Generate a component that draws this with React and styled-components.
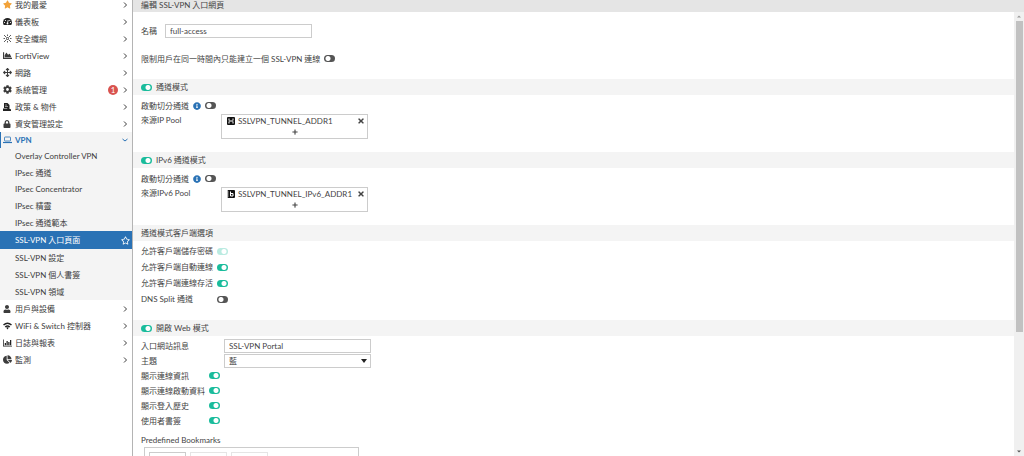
import { useState } from "react";
import styled, { createGlobalStyle, css } from "styled-components";
import {
  FaStar,
  FaRegStar,
  FaChartArea,
  FaArrowsAlt,
  FaCog,
  FaLock,
  FaUser,
  FaChartPie,
  FaInfoCircle,
  FaTimes,
  FaPlus,
  FaPen,
  FaTrash,
} from "react-icons/fa";

// Icons
const FabricIcon = () => (
  <svg width="9" height="9" viewBox="0 0 18 18" stroke="#333" strokeWidth="1.6" fill="none">
    <path d="M2 2l5 5M11 11l5 5M16 2l-5 5M7 11l-5 5M9 1v3M9 14v3M1 9h3M14 9h3" />
    <circle cx="9" cy="9" r="2" />
  </svg>
);

const GaugeIcon = () => (
  <svg width="9" height="9" viewBox="0 0 18 18">
    <path fill="#222" d="M9 2a9 9 0 0 0-9 9c0 2 .5 3.600 1.400 5h15.200c.9-1.400 1.400-3 1.400-5a9 9 0 0 0-9-9z" />
    <path stroke="#fff" strokeWidth="1.6" d="M9 12l1.500-6" />
    <g fill="#fff">
      <circle cx="3" cy="11" r="1.200" />
      <circle cx="5" cy="7" r="1.200" />
      <circle cx="13.500" cy="7" r="1.200" />
      <circle cx="15" cy="11" r="1.200" />
      <circle cx="9" cy="13" r="1.800" />
    </g>
  </svg>
);

const PolicyIcon = () => (
  <svg width="8" height="8" viewBox="0 0 16 16">
    <path fill="#222" d="M2 0h7l4 4v6H2z" />
    <path fill="#222" d="M0 11h8l2-2 6 4v3H0z" />
    <path stroke="#fff" strokeWidth="1" d="M4 4h4M4 7h6" />
  </svg>
);

const LaptopIcon = () => (
  <svg width="9" height="8" viewBox="0 0 18 16" fill="none" stroke="currentColor" strokeWidth="1.6">
    <rect x="3" y="2" width="12" height="8" rx="1" />
    <path d="M0 13h18" strokeWidth="2.400" />
  </svg>
);

const WifiIcon = () => (
  <svg width="9" height="8" viewBox="0 0 18 16" fill="none" stroke="#222" strokeWidth="3">
    <path d="M1 6c5-4.500 11-4.500 16 0M4.500 10c3-2.600 6-2.600 9 0" />
    <path d="M6.500 11.500c1.500-1.300 3.500-1.300 5 0L9 15z" fill="#222" stroke="none" />
  </svg>
);

const BarsIcon = () => (
  <svg width="9" height="8" viewBox="0 0 18 16" fill="#222">
    <path d="M0 1h1.500v12.500H18V15H0z" />
    <path d="M3.500 8H6v4.500H3.500zM7 4h2.500v8.500H7zM10.500 6H13v6.500h-2.500zM14 2h2.500v10.500H14z" />
  </svg>
);

const RangeIcon = () => (
  <svg width="8" height="8" viewBox="0 0 16 16">
    <rect width="16" height="16" rx="2" fill="#111" />
    <path d="M4 3v4M12 3v4M4 9v4M12 9v4M4 8h8" stroke="#fff" strokeWidth="2" />
  </svg>
);

const SixIcon = () => (
  <svg width="8" height="8" viewBox="0 0 16 16">
    <rect x="1" width="15" height="16" rx="2" fill="#111" />
    <path d="M7 3v9h5V7H7M0 4h3M0 8h3M0 12h3" fill="none" stroke="#fff" strokeWidth="2" />
  </svg>
);

const Chevron = ({ down }) => (
  <svg width="6" height="6" viewBox="0 0 12 12" fill="none" stroke="currentColor" strokeWidth="2">
    <path d={down ? "M1 4l5 4 5-4" : "M4 1l5 5-5 5"} />
  </svg>
);

const vpnItems = [
  { label: "Overlay Controller VPN", short: true },
  { label: "IPsec 通道" },
  { label: "IPsec Concentrator", short: true },
  { label: "IPsec 精靈" },
  { label: "IPsec 通道範本" },
  { label: "SSL-VPN 入口頁面", selected: true },
  { label: "SSL-VPN 設定" },
  { label: "SSL-VPN 個人書簽" },
  { label: "SSL-VPN 領域" },
];

const menu = [
  { label: "我的最愛", icon: <FaStar color="#f2a33a" /> },
  { label: "儀表板", icon: <GaugeIcon /> },
  { label: "安全織網", icon: <FabricIcon /> },
  { label: "FortiView", icon: <FaChartArea /> },
  { label: "網路", icon: <FaArrowsAlt /> },
  { label: "系統管理", icon: <FaCog />, badge: 1 },
  { label: "政策 & 物件", icon: <PolicyIcon /> },
  { label: "資安管理設定", icon: <FaLock size={8} /> },
  { label: "VPN", icon: <LaptopIcon />, children: vpnItems },
  { label: "用戶與設備", icon: <FaUser size={8} /> },
  { label: "WiFi & Switch 控制器", icon: <WifiIcon /> },
  { label: "日誌與報表", icon: <BarsIcon /> },
  { label: "監測", icon: <FaChartPie /> },
];

const Toggle = ({ id, on = false, disabled }) => {
  const [checked, setChecked] = useState(on);
  return (
    <Switch
      type="checkbox"
      id={id}
      checked={checked}
      disabled={disabled}
      onChange={() => setChecked(!checked)}
    />
  );
};

const Pool = ({ icon, name }) => (
  <PoolBox>
    <PoolEntry>
      {icon}
      <PoolName>{name}</PoolName>
      <IconButton type="button" aria-label="移除">
        <FaTimes size={8} />
      </IconButton>
    </PoolEntry>
    <IconButton type="button" aria-label="新增">
      <FaPlus size={6} />
    </IconButton>
  </PoolBox>
);

const SplitRow = ({ id }) => (
  <Row $height={17}>
    <label htmlFor={id}>啟動切分通道</label>
    <FaInfoCircle size={8} color="#2a72b5" />
    <Toggle id={id} />
  </Row>
);

const ToggleRow = ({ id, label, width, height, on, disabled }) => (
  <Row $height={height}>
    <Label htmlFor={id} $width={width}>
      {label}
    </Label>
    <Toggle id={id} on={on} disabled={disabled} />
  </Row>
);

const App = () => {
  return (
    <>
      <GlobalStyle />
      <Page>
        <Sidebar>
          <MenuList>
            {menu.map((item) => (
              <li key={item.label}>
                <MenuLink href="#" $open={!!item.children}>
                  <MenuIcon>{item.icon}</MenuIcon>
                  <MenuText>{item.label}</MenuText>
                  {item.badge && <Badge>{item.badge}</Badge>}
                  <Chevron down={!!item.children} />
                </MenuLink>
                {item.children && (
                  <SubMenu>
                    {item.children.map((sub) => (
                      <li key={sub.label}>
                        <SubLink href="#" $selected={sub.selected} $short={sub.short}>
                          <MenuText>{sub.label}</MenuText>
                          {sub.selected && <FaRegStar size={9} />}
                        </SubLink>
                      </li>
                    ))}
                  </SubMenu>
                )}
              </li>
            ))}
          </MenuList>
        </Sidebar>
        <Main>
          <Title>編輯 SSL-VPN 入口網頁</Title>
          <Body>
            <Form>
              <NameRow>
                <label htmlFor="name">名稱</label>
                <TextInput id="name" defaultValue="full-access" />
              </NameRow>
              <LimitRow>
                <label htmlFor="limit">限制用戶在同一時間內只能建立一個 SSL-VPN 連線</label>
                <Toggle id="limit" />
              </LimitRow>

              <SectionBar>
                <Toggle id="tunnel" on />
                <label htmlFor="tunnel">通道模式</label>
              </SectionBar>
              <Section>
                <SplitRow id="split4" />
                <PoolRow>
                  <PoolLabel>來源IP Pool</PoolLabel>
                  <Pool icon={<RangeIcon />} name="SSLVPN_TUNNEL_ADDR1" />
                </PoolRow>
              </Section>

              <SectionBar>
                <Toggle id="tunnel6" on />
                <label htmlFor="tunnel6">IPv6 通道模式</label>
              </SectionBar>
              <Section>
                <SplitRow id="split6" />
                <PoolRow>
                  <PoolLabel>來源IPv6 Pool</PoolLabel>
                  <Pool icon={<SixIcon />} name="SSLVPN_TUNNEL_IPv6_ADDR1" />
                </PoolRow>
              </Section>

              <SectionBar>通道模式客戶端選項</SectionBar>
              <Section>
                <ToggleRow id="save" label="允許客戶端儲存密碼" width={72} height={16} on disabled />
                <ToggleRow id="auto" label="允許客戶端自動連線" width={72} height={16} on />
                <ToggleRow id="alive" label="允許客戶端連線存活" width={72} height={16} on />
                <ToggleRow id="dns" label="DNS Split 通道" width={72} height={16} />
              </Section>

              <SectionBar>
                <Toggle id="web" on />
                <label htmlFor="web">開啟 Web 模式</label>
              </SectionBar>
              <Section>
                <Row>
                  <Label htmlFor="portal" $width={79}>
                    入口網站訊息
                  </Label>
                  <TextInput id="portal" defaultValue="SSL-VPN Portal" />
                </Row>
                <Row>
                  <Label htmlFor="theme" $width={79}>
                    主題
                  </Label>
                  <Select id="theme">
                    <option>藍</option>
                  </Select>
                </Row>
                <ToggleRow id="info" label="顯示連線資訊" width={64} on />
                <ToggleRow id="launch" label="顯示連線啟動資料" width={64} on />
                <ToggleRow id="history" label="顯示登入歷史" width={64} on />
                <ToggleRow id="bookmark" label="使用者書簽" width={64} on />
                <Subtitle>Predefined Bookmarks</Subtitle>
                <Bookmarks>
                  <ToolButton type="button" aria-label="新增">
                    <FaPlus size={6} />
                  </ToolButton>
                  <ToolButton type="button" aria-label="編輯" disabled>
                    <FaPen size={6} />
                  </ToolButton>
                  <ToolButton type="button" aria-label="刪除" disabled>
                    <FaTrash size={6} />
                  </ToolButton>
                </Bookmarks>
              </Section>
            </Form>
            <ScrollTrack>
              <Arrow viewBox="0 0 8 8">
                <path d="M2 5l2-2 2 2z" fill="#999" />
              </Arrow>
              <ScrollThumb />
              <Arrow viewBox="0 0 8 8">
                <path d="M2 3l2 2 2-2z" fill="#555" />
              </Arrow>
            </ScrollTrack>
          </Body>
        </Main>
      </Page>
    </>
  );
};

const GlobalStyle = createGlobalStyle`
  * {
    box-sizing: border-box;
  }
  body {
    margin: 0;
    overflow: hidden;
    background: #fff;
    color: #444;
    font: 8px/12px Lato, "Noto Sans CJK TC", sans-serif;
  }
  button, input, select {
    margin: 0;
    font: inherit;
    color: inherit;
  }
`;

const Page = styled.div`
  display: flex;
  height: 100vh;
  overflow: hidden;
`;

const Sidebar = styled.nav`
  flex: 0 0 133px;
  overflow: hidden;
  border-right: 1px solid #b4b4b4;
`;

const MenuList = styled.ul`
  margin: -4px 0 0;
  padding: 0;
  list-style: none;
`;

const MenuLink = styled.a`
  display: flex;
  align-items: center;
  height: 17px;
  padding: 0 4px 0 3px;
  color: #3c3c3c;
  text-decoration: none;
  ${({ $open }) =>
    $open &&
    css`
      height: 16px;
      padding-left: 2px;
      border-left: 1px solid #2a72b5;
      background: #f4f4f4;
      color: #2a72b5;
      font-weight: 700;
    `}
`;

const MenuIcon = styled.span`
  display: flex;
  width: 12px;
  font-size: 9px;
`;

const MenuText = styled.span`
  flex: 1;
  white-space: nowrap;
`;

const Badge = styled.span`
  width: 10px;
  height: 10px;
  margin-right: 4px;
  border-radius: 5px;
  background: #d9534f;
  color: #fff;
  line-height: 10px;
  text-align: center;
`;

const SubMenu = styled.ul`
  margin: 0;
  padding: 0;
  list-style: none;
  background: #f4f4f4;
`;

const SubLink = styled.a`
  display: flex;
  align-items: center;
  height: ${({ $short, $selected }) => ($selected ? 18 : $short ? 16 : 17)}px;
  padding: 0 2px 0 15px;
  background: ${({ $selected }) => ($selected ? "#2a72b5" : "transparent")};
  color: ${({ $selected }) => ($selected ? "#fff" : "#3c3c3c")};
  text-decoration: none;
`;

const Main = styled.main`
  display: flex;
  flex: 1;
  flex-direction: column;
  min-width: 0;
`;

const Title = styled.h1`
  flex: none;
  height: 12px;
  margin: 0;
  padding: 0 8px;
  background: #e5e5e5;
  font-size: 8px;
  font-weight: 400;
  line-height: 11px;
`;

const Body = styled.div`
  display: flex;
  flex: 1;
  min-height: 0;
`;

const Form = styled.form`
  flex: 1;
  min-width: 0;
  overflow: hidden;
`;

const Row = styled.div`
  display: flex;
  align-items: center;
  gap: 4px;
  height: ${({ $height = 15 }) => $height}px;
  white-space: nowrap;
`;

const NameRow = styled(Row)`
  height: 14px;
  margin: 12px 8px 0;
  gap: 8px;
`;

const LimitRow = styled(Row)`
  margin: 13px 8px;
`;

const Label = styled.label`
  width: ${({ $width }) => $width}px;
`;

const SectionBar = styled.div`
  display: flex;
  align-items: center;
  gap: 4px;
  height: 16px;
  padding: 0 8px;
  background: #f4f4f4;
`;

const Section = styled.div`
  padding: 2px 8px 13px;
`;

const PoolRow = styled.div`
  display: flex;
  align-items: flex-start;
`;

const PoolLabel = styled.span`
  width: 80px;
`;

const PoolBox = styled.div`
  display: flex;
  flex-direction: column;
  align-items: center;
  width: 147px;
  height: 25px;
  border: 1px solid #ccc;
`;

const PoolEntry = styled.div`
  display: flex;
  align-items: center;
  gap: 3px;
  width: 100%;
  height: 12px;
  padding: 0 2px 0 5px;
`;

const PoolName = styled.span`
  flex: 1;
`;

const IconButton = styled.button`
  display: flex;
  padding: 2px 0;
  border: 0;
  background: none;
`;

const control = css`
  width: 147px;
  height: 14px;
  padding: 0 4px;
  border: 1px solid #ccc;
  border-radius: 0;
  background: #fff;
`;

const TextInput = styled.input`
  ${control}
`;

const Select = styled.select`
  ${control}
  appearance: none;
  background: url("data:image/svg+xml,%3Csvg xmlns='http://www.w3.org/2000/svg' viewBox='0 0 6 4'%3E%3Cpath d='M0 0h6L3 4z' fill='%23222'/%3E%3C/svg%3E")
    no-repeat right 3px center / 6px 4px;
`;

const Switch = styled.input`
  flex: none;
  appearance: none;
  width: 11px;
  height: 7px;
  border-radius: 4px;
  background: radial-gradient(circle at 4px 50%, #fff 2px, #555 3px);
  &:checked {
    background: radial-gradient(circle at 7px 50%, #fff 2px, #1abc9c 3px);
  }
  &:disabled {
    opacity: 0.3;
  }
`;

const Subtitle = styled.h2`
  margin: 6px 0 1px;
  font-size: 8px;
  font-weight: 400;
  line-height: 12px;
`;

const Bookmarks = styled.div`
  display: flex;
  gap: 4px;
  width: 215px;
  height: 60px;
  margin-left: 3px;
  padding: 4px;
  border: 1px solid #ccc;
`;

const ToolButton = styled.button`
  width: 37px;
  height: 14px;
  padding: 0 6px;
  border: 1px solid #ccc;
  background: #fff;
  text-align: left;
  &:disabled {
    border-color: #e5e5e5;
    color: #aaa;
  }
`;

const ScrollTrack = styled.div`
  display: flex;
  flex: 0 0 10px;
  flex-direction: column;
  align-items: center;
  background: #f0f0f0;
`;

const ScrollThumb = styled.div`
  width: 7px;
  height: 70%;
  margin-bottom: auto;
  background: #c1c1c1;
`;

const Arrow = styled.svg`
  flex: none;
  width: 8px;
  height: 9px;
`;

export default App;
